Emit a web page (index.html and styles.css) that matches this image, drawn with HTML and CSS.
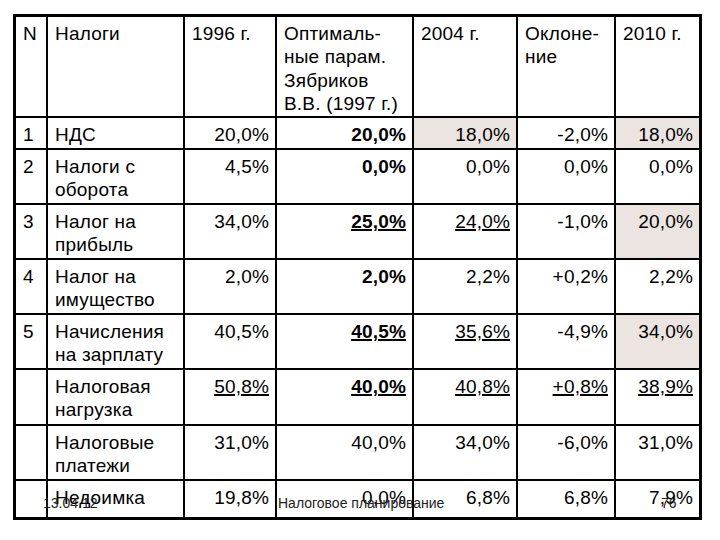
FILE: index.html
```html
<!DOCTYPE html>
<html lang="ru">
<head>
<meta charset="utf-8">
<title>Налоги</title>
<link rel="stylesheet" href="styles.css">
</head>
<body>
<div class="slide">
  <div class="grid">
    <div class="c">N</div>
    <div class="c">Налоги</div>
    <div class="c">1996 г.</div>
    <div class="c">Оптималь-<br>ные парам.<br>Зябриков<br>В.В. (1997 г.)</div>
    <div class="c">2004 г.</div>
    <div class="c">Оклоне-<br>ние</div>
    <div class="c">2010 г.</div>

    <div class="c">1</div>
    <div class="c">НДС</div>
    <div class="c r">20,0%</div>
    <div class="c r b">20,0%</div>
    <div class="c r sh">18,0%</div>
    <div class="c r">-2,0%</div>
    <div class="c r sh">18,0%</div>

    <div class="c">2</div>
    <div class="c">Налоги с<br>оборота</div>
    <div class="c r">4,5%</div>
    <div class="c r b">0,0%</div>
    <div class="c r">0,0%</div>
    <div class="c r">0,0%</div>
    <div class="c r">0,0%</div>

    <div class="c">3</div>
    <div class="c">Налог на<br>прибыль</div>
    <div class="c r">34,0%</div>
    <div class="c r b"><u>25,0%</u></div>
    <div class="c r"><u>24,0%</u></div>
    <div class="c r">-1,0%</div>
    <div class="c r sh">20,0%</div>

    <div class="c">4</div>
    <div class="c">Налог на<br>имущество</div>
    <div class="c r">2,0%</div>
    <div class="c r b">2,0%</div>
    <div class="c r">2,2%</div>
    <div class="c r">+0,2%</div>
    <div class="c r">2,2%</div>

    <div class="c">5</div>
    <div class="c">Начисления<br>на зарплату</div>
    <div class="c r">40,5%</div>
    <div class="c r b"><u>40,5%</u></div>
    <div class="c r"><u>35,6%</u></div>
    <div class="c r">-4,9%</div>
    <div class="c r sh">34,0%</div>

    <div class="c"></div>
    <div class="c">Налоговая<br>нагрузка</div>
    <div class="c r"><u>50,8%</u></div>
    <div class="c r b"><u>40,0%</u></div>
    <div class="c r"><u>40,8%</u></div>
    <div class="c r"><u>+0,8%</u></div>
    <div class="c r"><u>38,9%</u></div>

    <div class="c"></div>
    <div class="c">Налоговые<br>платежи</div>
    <div class="c r">31,0%</div>
    <div class="c r">40,0%</div>
    <div class="c r">34,0%</div>
    <div class="c r">-6,0%</div>
    <div class="c r">31,0%</div>

    <div class="c"></div>
    <div class="c">Недоимка</div>
    <div class="c r">19,8%</div>
    <div class="c r">0,0%</div>
    <div class="c r">6,8%</div>
    <div class="c r">6,8%</div>
    <div class="c r">7,9%</div>
  </div>
  <div class="foot foot-date">13.04.12</div>
  <div class="foot foot-title">Налоговое планирование</div>
  <div class="foot foot-num">76</div>
</div>
</body>
</html>
```

FILE: styles.css
```css
html, body {
  margin: 0;
  padding: 0;
  background: #ffffff;
}

.slide {
  position: relative;
  width: 720px;
  height: 540px;
  overflow: hidden;
  padding: 14px 0 0 13px;
  box-sizing: border-box;
  font-family: "Liberation Sans", Arial, sans-serif;
  color: #000000;
}

.grid {
  display: grid;
  grid-template-columns: 30px 135px 90px 135px 102px 96px 83px;
  grid-template-rows: 99px 30px 53px 53px 53px 53px 54px 53px 36px;
  gap: 2px;
  width: max-content;
  background: #000000;
  border: 3px solid #000000;
}

.c {
  background: #ffffff;
  font-size: 19px;
  line-height: 23.4px;
  letter-spacing: 0.2px;
  padding: 5px 6px 0 7px;
  white-space: nowrap;
  overflow: hidden;
}

.r {
  text-align: right;
}

.b {
  font-weight: bold;
}

.sh {
  background: #ebe4e0;
}

.c u {
  text-decoration-thickness: 1.5px;
  text-underline-offset: 1px;
}

.foot {
  position: absolute;
  font-size: 14px;
  line-height: 16px;
  color: #222222;
  top: 495px;
}

.foot-date {
  left: 43px;
}

.foot-title {
  left: 278px;
}

.foot-num {
  left: 661px;
}
```
